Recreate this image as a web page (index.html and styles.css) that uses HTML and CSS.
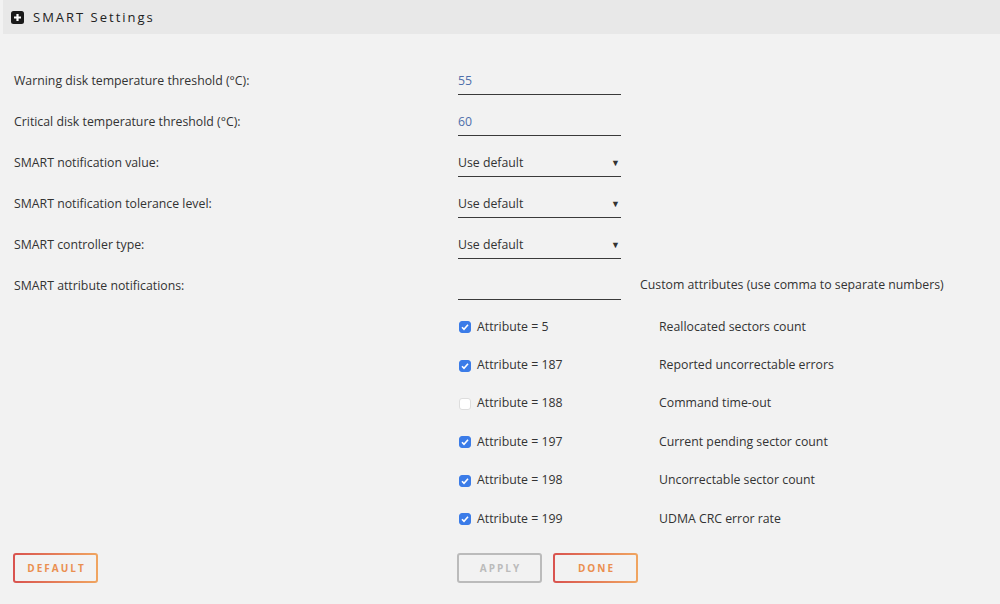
FILE: index.html
```html
<!DOCTYPE html>
<html lang="en">
<head>
    <meta charset="UTF-8">
    <meta name="viewport" content="width=device-width, initial-scale=1.0">
    <title>SMART Settings</title>
    <link rel="stylesheet" href="styles.css">
</head>
<body>
    <div class="header">
        <span class="plus-icon">
            <svg width="13" height="13" viewBox="0 0 13 13"><rect width="13" height="13" rx="2.5" fill="#1a1a1a"/><path d="M6.5 3v7M3 6.5h7" stroke="#fff" stroke-width="2.2"/></svg>
        </span>
        <span class="title">SMART Settings</span>
    </div>

    <div class="container">
        <div class="row">
            <label>Warning disk temperature threshold (°C):</label>
            <div class="field value">55</div>
        </div>
        <div class="row">
            <label>Critical disk temperature threshold (°C):</label>
            <div class="field value">60</div>
        </div>
        <div class="row">
            <label>SMART notification value:</label>
            <div class="field select">Use default <span class="arrow">▼</span></div>
        </div>
        <div class="row">
            <label>SMART notification tolerance level:</label>
            <div class="field select">Use default <span class="arrow">▼</span></div>
        </div>
        <div class="row">
            <label>SMART controller type:</label>
            <div class="field select">Use default <span class="arrow">▼</span></div>
        </div>
        <div class="row">
            <label>SMART attribute notifications:</label>
            <div class="field"></div>
            <span class="hint">Custom attributes (use comma to separate numbers)</span>
        </div>

        <div class="attributes">
            <div class="attr"><span class="check on"><svg width="12" height="12" viewBox="0 0 12 12"><path d="M3 6.2l2 2.1 4-4.6" fill="none" stroke="#fff" stroke-width="1.6"/></svg></span>Attribute = 5</div>
            <div class="desc">Reallocated sectors count</div>
            <div class="attr"><span class="check on"><svg width="12" height="12" viewBox="0 0 12 12"><path d="M3 6.2l2 2.1 4-4.6" fill="none" stroke="#fff" stroke-width="1.6"/></svg></span>Attribute = 187</div>
            <div class="desc">Reported uncorrectable errors</div>
            <div class="attr"><span class="check"></span>Attribute = 188</div>
            <div class="desc">Command time-out</div>
            <div class="attr"><span class="check on"><svg width="12" height="12" viewBox="0 0 12 12"><path d="M3 6.2l2 2.1 4-4.6" fill="none" stroke="#fff" stroke-width="1.6"/></svg></span>Attribute = 197</div>
            <div class="desc">Current pending sector count</div>
            <div class="attr"><span class="check on"><svg width="12" height="12" viewBox="0 0 12 12"><path d="M3 6.2l2 2.1 4-4.6" fill="none" stroke="#fff" stroke-width="1.6"/></svg></span>Attribute = 198</div>
            <div class="desc">Uncorrectable sector count</div>
            <div class="attr"><span class="check on"><svg width="12" height="12" viewBox="0 0 12 12"><path d="M3 6.2l2 2.1 4-4.6" fill="none" stroke="#fff" stroke-width="1.6"/></svg></span>Attribute = 199</div>
            <div class="desc">UDMA CRC error rate</div>
        </div>

        <div class="buttons">
            <div class="left">
                <button class="btn">DEFAULT</button>
            </div>
            <div class="right">
                <button class="btn disabled">APPLY</button>
                <button class="btn">DONE</button>
            </div>
        </div>
    </div>
</body>
</html>
```

FILE: styles.css
```css
body {
    font-family: "Open Sans", "Noto Sans", sans-serif;
    background-color: #f2f2f2;
    color: #333;
    margin: 0;
    padding: 0;
    font-size: 12.3px;
}

.header {
    margin-left: 3px;
    height: 34px;
    background-color: #e8e8e8;
    display: flex;
    align-items: center;
    padding-left: 8px;
}

.plus-icon {
    display: flex;
    margin-right: 9px;
}

.title {
    font-size: 13px;
    letter-spacing: 2px;
    color: #222;
}

.container {
    padding: 32px 0 0 14px;
}

.row {
    display: grid;
    grid-template-columns: 444px 163px auto;
    align-items: center;
    margin-bottom: 12px;
}

.field {
    height: 28px;
    border-bottom: 1px solid #3a3a3a;
    display: flex;
    align-items: center;
    justify-content: space-between;
    box-sizing: content-box;
}

.value {
    color: #4f6fab;
}

.arrow {
    font-size: 9px;
    margin-right: 1px;
}

.hint {
    margin: -3px 0 0 19px;
}

.attributes {
    display: grid;
    grid-template-columns: 201px auto;
    margin-left: 444px;
    margin-top: -5px;
}

.attr, .desc {
    height: 38.4px;
    display: flex;
    align-items: center;
}

.check {
    width: 12px;
    height: 12px;
    border-radius: 3px;
    background-color: #fff;
    border: 1px solid #ddd;
    box-sizing: border-box;
    margin: 2px 6px 0 1px;
    display: flex;
}

.check.on {
    background-color: #3b7ce8;
    border-color: #3b7ce8;
}

.check svg {
    margin: -1px;
}

.buttons {
    display: flex;
    margin-top: 16px;
}

.left {
    width: 444px;
    margin-left: -1px;
}

.right {
    display: flex;
    gap: 11px;
}

.btn {
    width: 85px;
    height: 30px;
    border: 2px solid transparent;
    border-radius: 3px;
    background: linear-gradient(#f2f2f2, #f2f2f2) padding-box,
                linear-gradient(90deg, #d9534f, #f0a560) border-box;
    color: #ea8f50;
    font-family: "Open Sans", sans-serif;
    font-size: 10px;
    font-weight: 700;
    letter-spacing: 2px;
    padding: 0 0 0 2px;
    cursor: pointer;
}

.btn.disabled {
    background: #f2f2f2;
    border-color: #bbb;
    color: #bbb;
}
```
